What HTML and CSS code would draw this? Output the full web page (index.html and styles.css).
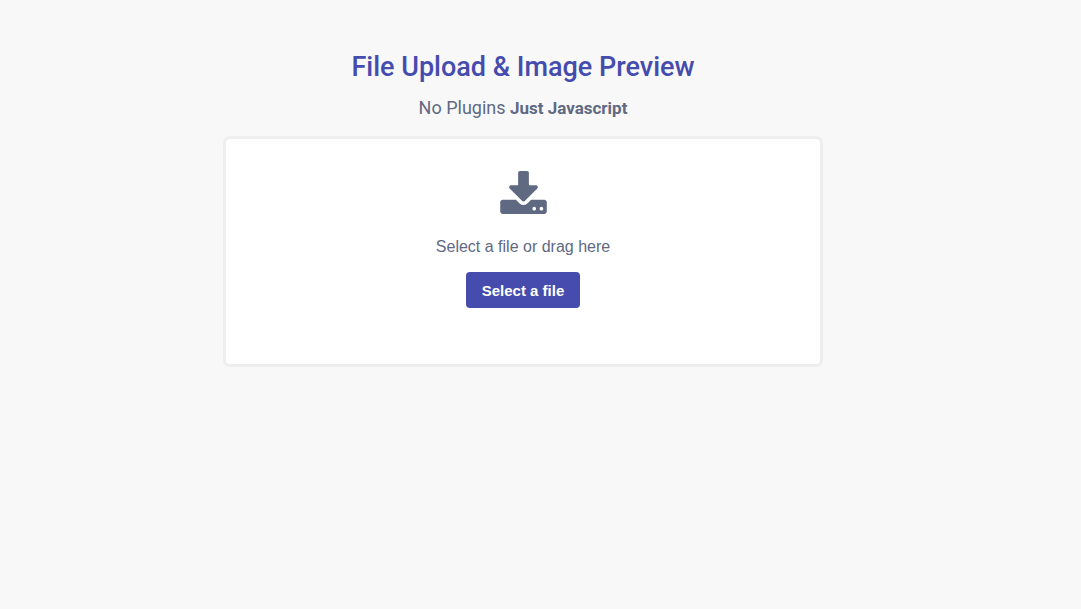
FILE: index.html
```html
<!DOCTYPE html>
<html lang="en">
<head>
    <meta charset="UTF-8">
    <meta name="viewport" content="width=device-width, initial-scale=1.0">
    <title>File Upload &amp; Image Preview</title>
    <link rel="stylesheet" href="styles.css">
</head>
<body>

<main class="page">
    <h2>File Upload &amp; Image Preview</h2>
    <p class="lead">No Plugins <b>Just Javascript</b></p>

    <form id="file-upload-form" class="uploader">
        <input type="file" id="file-upload" name="fileUpload" accept="image/*" aria-label="Select a file" hidden>

        <div class="drop-area" id="file-drag">
            <svg class="download-icon" viewBox="0 0 1664 1536" aria-hidden="true">
                <path d="M1280 1344q0-26-19-45t-45-19-45 19-19 45 19 45 45 19 45-19 19-45zm256 0q0-26-19-45t-45-19-45 19-19 45 19 45 45 19 45-19 19-45zm128-224v320q0 40-28 68t-68 28H96q-40 0-68-28t-28-68v-320q0-40 28-68t68-28h465l135 136q58 56 136 56t136-56l136-136h464q40 0 68 28t28 68zm-325-569q17 41-14 70l-448 448q-18 19-45 19t-45-19L339 621q-31-29-14-70 17-39 59-39h256V64q0-26 19-45t45-19h256q26 0 45 19t19 45v448h256q42 0 59 39z"/>
            </svg>
            <div class="hint">Select a file or drag here</div>
            <button type="button" class="btn" id="file-upload-btn">Select a file</button>
        </div>
    </form>
</main>

<script>
    const fileInput = document.getElementById('file-upload');

    document.getElementById('file-upload-btn').addEventListener('click', () => fileInput.click());
</script>

</body>
</html>
```
FILE: styles.css
```css
:root {
    --primary-color: #454cad;
    --text-color: #5f6982;
    --background-color: #f8f8f8;
    --border-color: #eee;
}

* {
    box-sizing: border-box;
}

body {
    margin: 0;
    padding: 0 35px 0 0;
    background-color: var(--background-color);
    color: var(--text-color);
    font-family: Roboto, "Liberation Sans", sans-serif;
    text-align: center;
}

.page {
    max-width: 600px;
    margin: 0 auto;
    padding-top: 48px;
}

h2 {
    margin: 0;
    color: var(--primary-color);
    font-size: 27px;
    font-weight: 500;
    line-height: 38px;
}

.lead {
    margin: 8px 0 14px;
    font-size: 18px;
    line-height: 28px;
}

.lead b {
    font-size: 17px;
}

.drop-area {
    display: flex;
    flex-direction: column;
    align-items: center;
    padding: 32px 20px 56px;
    background-color: #fff;
    border: 3px solid var(--border-color);
    border-radius: 7px;
}

.download-icon {
    width: 47px;
    height: 43px;
    fill: var(--text-color);
}

.hint {
    margin: 21px 0 13px;
    font-family: "Liberation Sans", Arial, sans-serif;
    font-size: 16px;
    line-height: 24px;
}

.btn {
    height: 36px;
    padding: 0 16px;
    background-color: var(--primary-color);
    border: none;
    border-radius: 4px;
    color: #fff;
    font-family: "Liberation Sans", Arial, sans-serif;
    font-size: 15px;
    font-weight: 700;
    cursor: pointer;
}
```
